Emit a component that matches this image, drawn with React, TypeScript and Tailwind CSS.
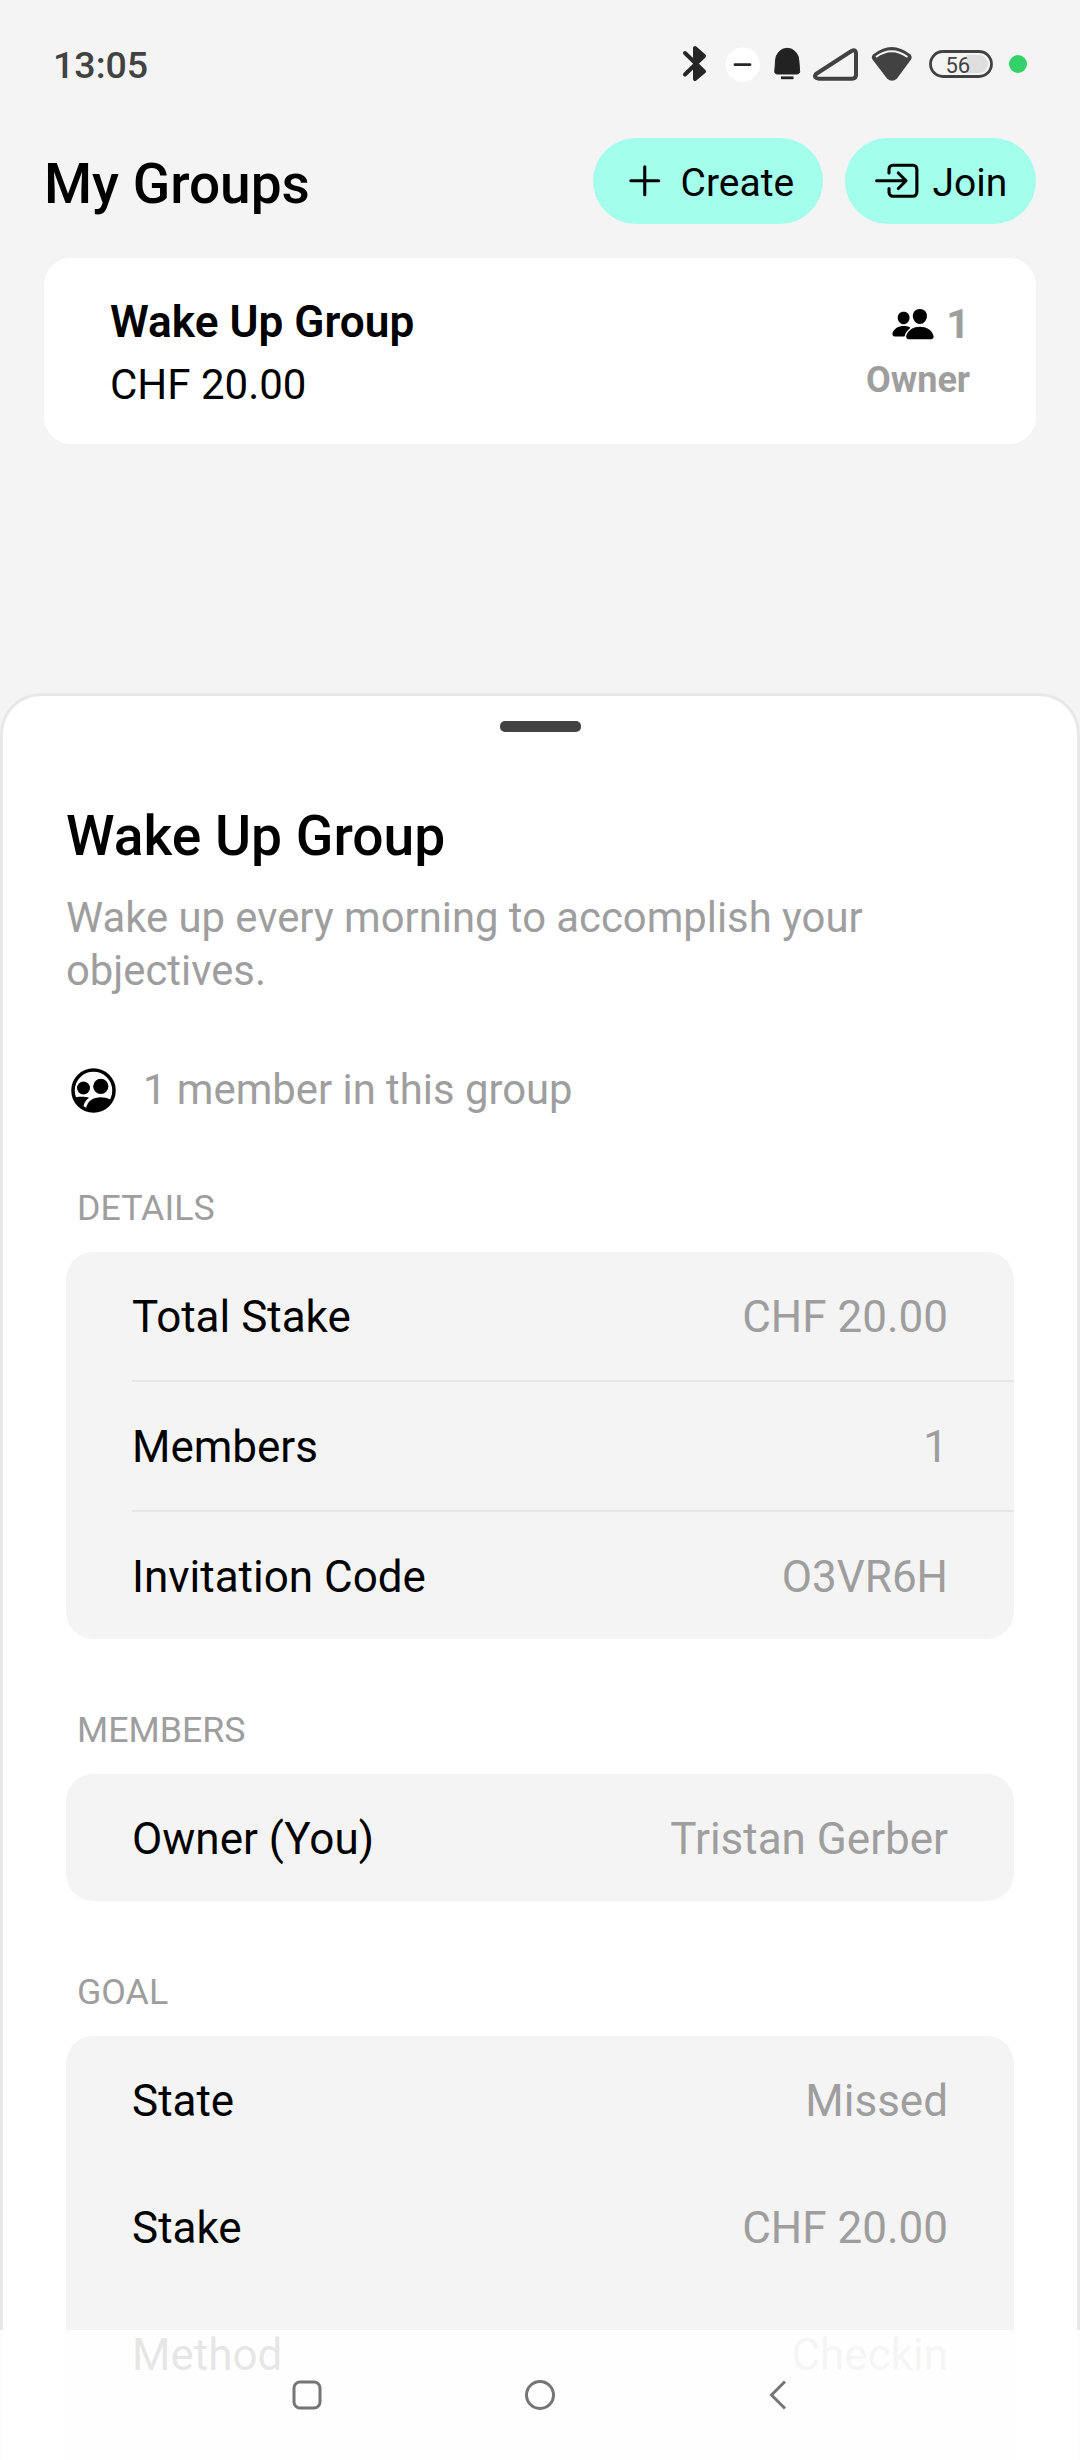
import { IoAdd, IoEnterOutline, IoPeople } from "react-icons/io5";

type RowData = { label: string; value: string };

function StatusIcons() {
  return (
    <svg width="380" height="40" viewBox="0 0 380 40" fill="none">
      <path d="M5 7 24 25.500 15 33V2L24 10 5 28.500" stroke="#262626" strokeWidth="4" strokeLinejoin="round" strokeLinecap="round" />
      <path d="M15 2 24 10 15 17.500ZM15 17.500 24 25.500 15 33Z" fill="#262626" />
      <circle cx="62.700" cy="18.700" r="17.200" fill="#fff" />
      <path d="M55 18.700h15" stroke="#262626" strokeWidth="2.800" strokeLinecap="round" />
      <path d="M95.500 15a11.700 12.700 0 0 1 23.400 0l.600 9q1 4-3 4h-18.600q-4 0-3-4Z" fill="#222" stroke="#222" strokeWidth="1" />
      <path d="M101 31.800h12.500" stroke="#222" strokeWidth="2.800" />
      <path d="M136 28 171.500 5q4.500-2.200 4.500 2.500v21.500q0 3.700-4 3.700h-33q-6-.500-3-4.700Z" stroke="#424242" strokeWidth="4" strokeLinejoin="round" />
      <path d="M193 8.500Q211.800-6.500 230.500 8.500q2 2.500 .500 5L217 32.500q-5 4.500-10 0L192.500 13.500q-1.500-2.500 .500-5Z" fill="#424242" />
      <path d="M196 11Q211.700-.500 227.500 11" stroke="#f4f4f4" strokeWidth="1.800" />
      <path d="M287 9h12a9 9 0 0 1 0 18h-12Z" fill="#dedede" />
      <rect x="250.500" y="5.500" width="61" height="25" rx="12.500" stroke="#424242" strokeWidth="2.800" />
      <text x="265.500" y="26.500" fontSize="22" fill="#424242" fontFamily="Roboto">56</text>
      <circle cx="338" cy="18" r="9" fill="#34d068" />
    </svg>
  );
}

function MembersBadge() {
  return (
    <svg width="45" height="45" viewBox="0 0 45 45" className="shrink-0">
      <circle cx="22.500" cy="22.500" r="20.500" fill="#fff" stroke="#000" strokeWidth="3.500" />
      <circle cx="12.500" cy="20" r="6.500" />
      <circle cx="29.800" cy="18.300" r="7.600" />
      <path d="M2.500 30C6 28.300 14 28.300 18 29.800 14.500 32.500 12.800 35 12.300 39.500Q5 36 2.500 30Z" />
      <path d="M15 40.500C16.500 33 22 29.300 30 29.300q6 0 11 3Q35 43 22.500 43.500 18 43 15 40.500Z" />
    </svg>
  );
}

function Row({ label, value }: RowData) {
  return (
    <div className="flex h-[127px] items-center justify-between px-[66px] pt-[3px] text-[44px] leading-[52px]">
      <span className="text-black">{label}</span>
      <span className="text-[#9e9e9e]">{value}</span>
    </div>
  );
}

type SectionProps = { title: string; rows: RowData[]; divided?: boolean; tall?: boolean; className: string };

function Section({ title, rows, divided, tall, className }: SectionProps) {
  return (
    <section className={className}>
      <h3 className="pl-[11px] text-[35.750px] leading-[42px] text-[#9e9e9e]">{title}</h3>
      <div className={`mt-[23px] overflow-hidden rounded-[27px] bg-[#f4f4f4] ${tall ? "pb-[127px]" : ""}`}>
        {rows.map((row, i) => (
          <div key={row.label}>
            {divided && i > 0 && <div className="mt-px ml-[66px] h-[2px] bg-[#e6e6e6]" />}
            <Row {...row} />
          </div>
        ))}
      </div>
    </section>
  );
}

export default function App() {
  return (
    <div className="relative flex h-[2460px] w-[1080px] flex-col overflow-hidden bg-[#f4f4f4] font-['Roboto',sans-serif] text-black">
      <header className="flex h-[138px] shrink-0 items-start justify-between pl-[53px] pr-[20px]">
        <span className="mt-[43px] text-[37.500px] font-[470] leading-[44px] text-[#424242]">13:05</span>
        <div className="mt-[46px]">
          <StatusIcons />
        </div>
      </header>

      <div className="flex h-[86px] shrink-0 items-center px-[44px]">
        <h1 className="mr-auto pt-[6px] text-[55px] font-medium leading-[64px]">My Groups</h1>
        <button className="flex h-[86px] w-[230px] items-center gap-[11px] rounded-[43px] bg-[#a3ffeb] pl-[27px] text-[39px]">
          <IoAdd size={49.5} />
          <span className="pt-[4px]">Create</span>
        </button>
        <button className="ml-[22px] flex h-[86px] w-[191px] items-center gap-[11px] rounded-[43px] bg-[#a3ffeb] pl-[27px] text-[39px]">
          <IoEnterOutline size={49.5} />
          <span className="pt-[4px]">Join</span>
        </button>
      </div>

      <div className="mx-[44px] mt-[34px] flex h-[186px] shrink-0 justify-between rounded-[27px] bg-white px-[66px]">
        <div className="pt-[38px]">
          <div className="text-[44.200px] font-semibold leading-[52px]">Wake Up Group</div>
          <div className="mt-[13px] text-[42px] leading-[48px]">CHF 20.00</div>
        </div>
        <div className="flex flex-col items-end pt-[42px] font-bold text-[#9e9e9e]">
          <div className="flex items-center gap-[11px] text-[41.250px] leading-[48px]">
            <IoPeople size={44} color="#000" />
            <span>1</span>
          </div>
          <div className="mt-[11px] text-[36px] leading-[42px]">Owner</div>
        </div>
      </div>

      <main className="mt-[249px] flex h-[1800px] shrink-0 flex-col rounded-t-[41px] border-[3px] border-b-0 border-[#e8e8e8] bg-white px-[63px]">
        <div className="mt-[25px] ml-px h-[11px] w-[81px] shrink-0 self-center rounded-[5px] bg-[#424242]" />
        <h2 className="mt-[72px] text-[55.200px] font-medium leading-[64px]">Wake Up Group</h2>
        <p className="mt-[23px] text-[41.800px] leading-[53px] text-[#9e9e9e]">
          Wake up every morning to accomplish your
          <br />
          objectives.
        </p>
        <div className="mt-[69px] flex items-center gap-[27px] pl-[5px] text-[41.800px] leading-[48px] text-[#9e9e9e]">
          <MembersBadge />
          <span>1 member in this group</span>
        </div>
        <Section
          className="mt-[73px]"
          title="DETAILS"
          divided
          rows={[
            { label: "Total Stake", value: "CHF 20.00" },
            { label: "Members", value: "1" },
            { label: "Invitation Code", value: "O3VR6H" },
          ]}
        />
        <Section className="mt-[70px]" title="MEMBERS" rows={[{ label: "Owner (You)", value: "Tristan Gerber" }]} />
        <Section
          className="mt-[70px]"
          title="GOAL"
          tall
          rows={[
            { label: "State", value: "Missed" },
            { label: "Stake", value: "CHF 20.00" },
            { label: "Method", value: "Checkin" },
          ]}
        />
      </main>

      <nav className="absolute inset-x-0 bottom-0 flex h-[130px] items-start bg-white/90 pl-[292px] pt-[50px]">
        <svg width="30" height="30" viewBox="0 0 30 30" fill="none" stroke="#757575" strokeWidth="3">
          <rect x="2" y="2" width="26" height="26" rx="6" />
        </svg>
        <svg className="ml-[203px]" width="30" height="30" viewBox="0 0 30 30" fill="none" stroke="#757575" strokeWidth="3">
          <circle cx="15" cy="15" r="13.500" />
        </svg>
        <svg className="ml-[214px]" width="18" height="30" viewBox="0 0 18 30" fill="none" stroke="#757575" strokeWidth="3">
          <path d="M16 1.500 2.500 15 16 28.500" />
        </svg>
      </nav>
    </div>
  );
}
